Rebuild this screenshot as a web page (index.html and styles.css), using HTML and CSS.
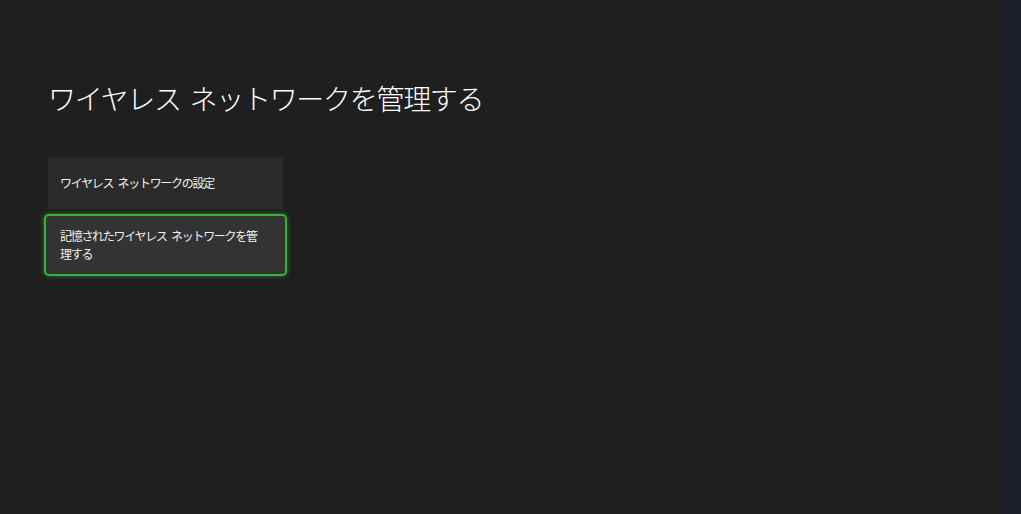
FILE: index.html
```html
<!DOCTYPE html>
<html lang="ja">
<head>
    <meta charset="UTF-8">
    <title>ワイヤレス ネットワークを管理する</title>
    <link rel="stylesheet" href="styles.css">
</head>
<body>
<div class="screen">
    <div class="main">
        <h1 class="title">ワイヤレス ネットワークを管理する</h1>
        <div class="menu">
            <div class="item">ワイヤレス ネットワークの設定</div>
            <div class="item focused">記憶されたワイヤレス ネットワークを管理する</div>
        </div>
    </div>
    <div class="edge"></div>
</div>
</body>
</html>
```

FILE: styles.css
```css
html, body {
    margin: 0;
    padding: 0;
    height: 100%;
}
body {
    background-color: #1f1f1f;
    color: #ffffff;
    font-family: "Noto Sans CJK JP", "Noto Sans", sans-serif;
}
.screen {
    display: flex;
    height: 100%;
}
.main {
    flex: 1;
    padding: 76px 0 0 48px;
}
.edge {
    width: 24px;
    background-color: #1b1d27;
}
.title {
    margin: 0;
    font-size: 28px;
    font-weight: 300;
    line-height: 44px;
    letter-spacing: -1.3px;
    word-spacing: 4px;
}
.menu {
    margin-top: 37px;
    width: 235px;
    display: flex;
    flex-direction: column;
    gap: 5px;
}
.item {
    background-color: #2a2a2a;
    color: #f0f0f0;
    font-size: 12px;
    line-height: 18px;
    letter-spacing: -1.3px;
    word-spacing: 3px;
    padding: 17px 12px;
}
.focused {
    margin: 0 -4px;
    padding: 11px 22px 11px 14px;
    background-color: #333333;
    border: 2px solid #35b535;
    border-radius: 5px;
    box-shadow: 0 0 5px rgba(60, 200, 60, 0.55);
}
```
